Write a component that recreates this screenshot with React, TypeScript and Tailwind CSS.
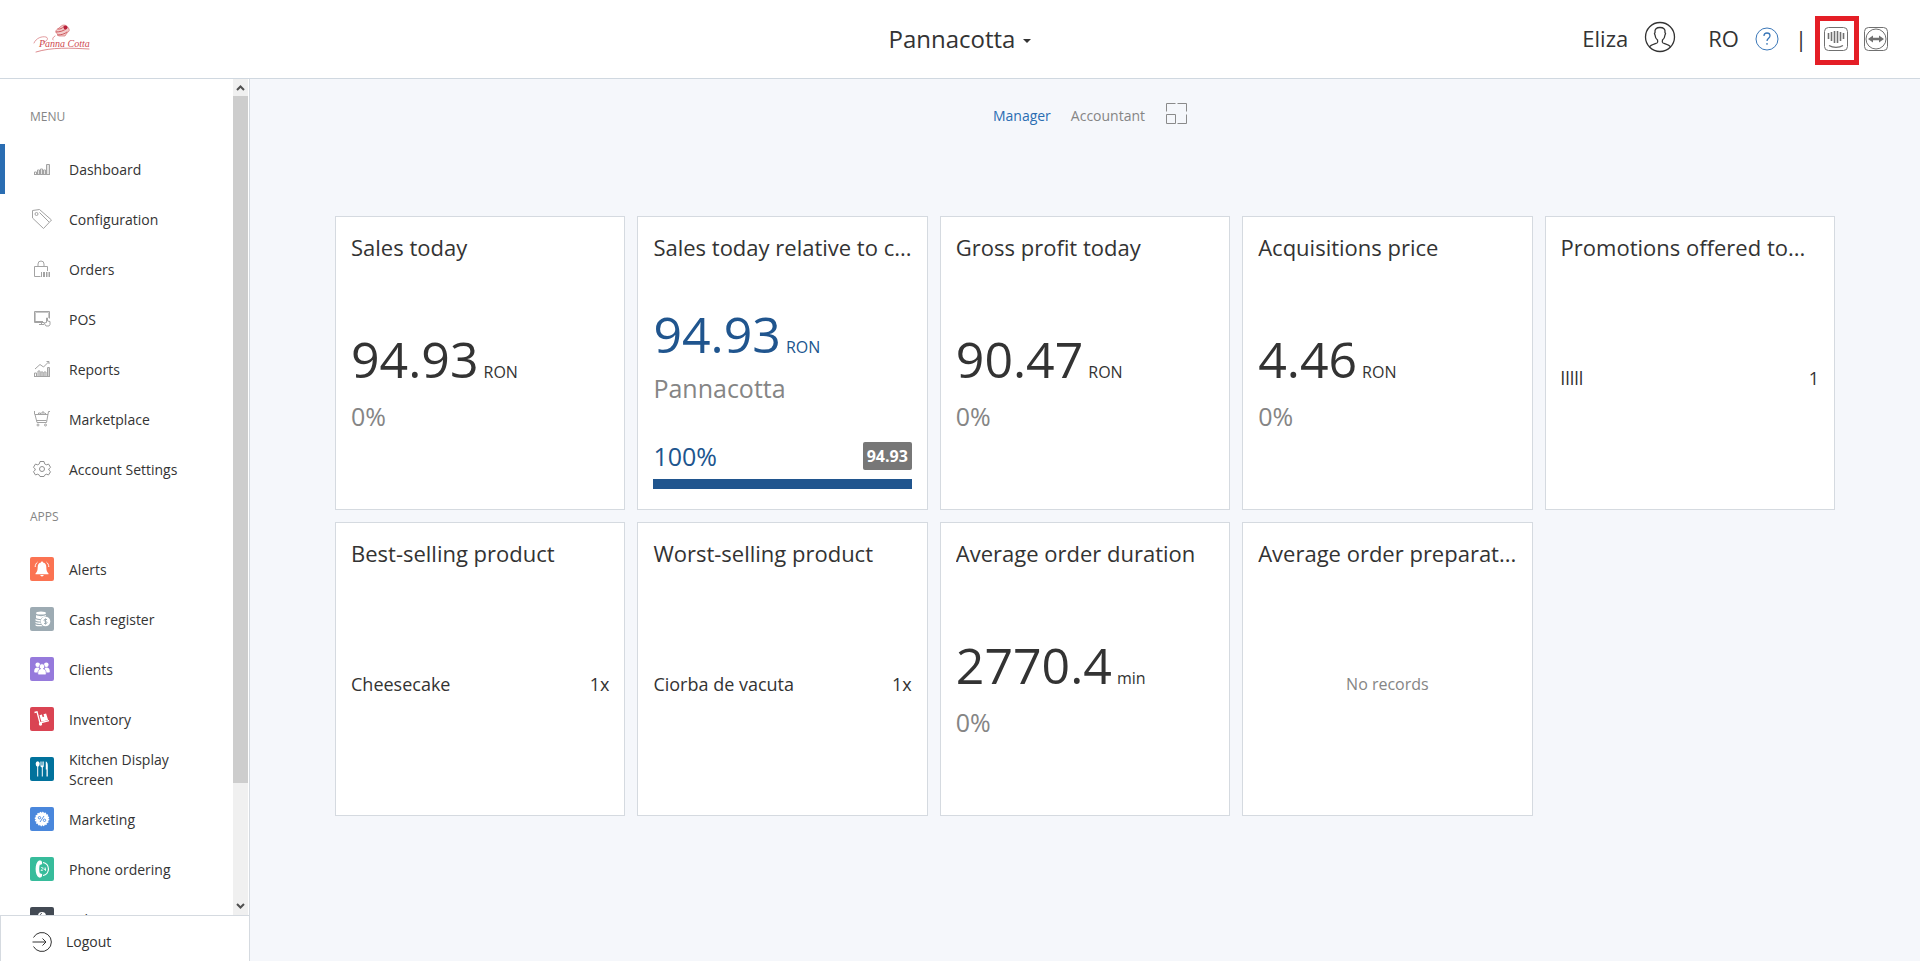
import React from "react";

type IconProps = { className?: string };

const lineIcon = "h-6 w-6 shrink-0 text-[#a3a3a3]";

const BarsIcon = () => (
    <svg viewBox="0 0 24 24" className={lineIcon} fill="none" stroke="currentColor">
        <path d="M4 17.5h16M4.5 17v-2h2v2M7.5 17v-4h2v4M10.5 17v-5h2v5M13.5 17v-4h2v4M16.5 17V7.500h3V17" />
        <path d="M9 14v4M12 13v5M15 14v4M18 8v10" strokeWidth="1.500" opacity=".4" />
    </svg>
);

const TagIcon = () => (
    <svg viewBox="0 0 24 24" className={lineIcon} fill="none" stroke="currentColor">
        <path d="M2.5 3.5l7-1 12 10.500-8 8.500L2.500 11z" />
        <circle cx="6.5" cy="7" r="1.500" />
        <path d="M9.5 5.500l9.500 9.500" />
    </svg>
);

const BagIcon = () => (
    <svg viewBox="0 0 24 24" className={lineIcon} fill="none" stroke="currentColor">
        <path d="M10.5 19.500h-6v-10h13V14M8 9.500V7a3 3 0 0 1 6 0v2.500" />
        <path d="M11.5 15v5M13.5 15v5M14.5 15v5M16.500 15v5M18 15v5M19.500 15v5" />
    </svg>
);

const PosIcon = () => (
    <svg viewBox="0 0 24 24" className={lineIcon} fill="none" stroke="currentColor">
        <path d="M14 15.500H4.500v-11h15v7M5 14.500h8M9 17.500h5M11.500 15.500v2" />
        <path d="M5.5 14V5.500h13V11" opacity=".6" />
        <path d="M16.5 15.500v-4.500h1v3l2.500.5v3l-1 1.500h-3l-2-3z" />
    </svg>
);

const ReportsIcon = () => (
    <svg viewBox="0 0 24 24" className={lineIcon} fill="none" stroke="currentColor">
        <path d="M4 19.500h16M4.500 19v-3h2v3M8 19v-5h2v5M11 19v-4h2v4M14 19v-4h2v4M17.500 19v-8.500h2V19" />
        <path d="M9 15v4M12 16v3M15 16v3M18.500 11v8" opacity=".5" />
        <path d="M5 12l5-4.500 3.500 2.500L18.500 5M16.500 4.500h2.500V7" />
    </svg>
);

const CartIcon = () => (
    <svg viewBox="0 0 24 24" className={lineIcon} fill="none" stroke="currentColor">
        <path d="M20 4.500h-1.500L16.500 15.500H7L5 7.500h13M4.500 4v3.500M6.500 13.500h10" />
        <path d="M8.500 7.500V6h2v1.500M12 7.500V5h2v2.500M15.500 7.500V6" />
        <circle cx="8" cy="18" r="1" />
        <circle cx="15.5" cy="18" r="1" />
    </svg>
);

const GearIcon = () => (
    <svg viewBox="0 0 24 24" className="h-6 w-6 shrink-0 text-[#8f8f8f]" fill="none" stroke="currentColor">
        <path d="M10 4.500h4l.6 2.300 1.700 1 2.300-.7 1.900 3.200-1.700 1.700v1l1.700 1.700-1.900 3.200-2.300-.7-1.700 1-.6 1.300h-4l-.6-1.300-1.700-1-2.300.7-1.900-3.200L5.200 13v-1l-1.700-1.700 1.900-3.200 2.300.7 1.700-1z" />
        <circle cx="12" cy="12" r="2.500" />
    </svg>
);

const AppIcon = ({ className, children }: IconProps & { children: React.ReactNode }) => (
    <svg viewBox="0 0 24 24" className={`h-6 w-6 shrink-0 rounded-xs text-white ${className}`} fill="currentColor">
        {children}
    </svg>
);

const MENU = [
    { name: "Dashboard", icon: <BarsIcon />, active: true },
    { name: "Configuration", icon: <TagIcon /> },
    { name: "Orders", icon: <BagIcon /> },
    { name: "POS", icon: <PosIcon /> },
    { name: "Reports", icon: <ReportsIcon /> },
    { name: "Marketplace", icon: <CartIcon /> },
    { name: "Account Settings", icon: <GearIcon /> },
];

const APPS = [
    {
        name: "Alerts",
        icon: (
            <AppIcon className="bg-[#fb7352]">
                <path d="M12 4.500c.7 0 1 .4 1 1 2.300.5 3.300 2.300 3.300 4.500 0 3.500.7 5 2.200 6.500v.7h-13v-.7C7 15 7.700 13.500 7.700 10c0-2.200 1-4 3.300-4.500 0-.6.300-1 1-1zM10.300 18h3.400a1.700 1.500 0 0 1-3.400 0z" />
                <path d="M7.500 5.200C6 6.300 5.200 8 5.200 10M16.500 5.200C18 6.300 18.800 8 18.800 10" fill="none" stroke="currentColor" />
            </AppIcon>
        ),
    },
    {
        name: "Cash register",
        icon: (
            <AppIcon className="bg-[#9dabb3]">
                <ellipse cx="11" cy="6" rx="5" ry="1.600" />
                <path d="M6 8c2 1.500 8 1.500 10 0v1.200c-3 .3-5 1.800-5.200 3C9 12 7 11.800 6 11zM5.500 12c1.500.9 3 1 5 1v1.500c-2 0-4-.2-5-1zM5.500 14.700c1.500.8 3 .9 5 .9l.4 1.400c-2 0-4-.2-5.400-1zM5.500 17.200c1.500.8 4 1 6 .9l1 1.200c-3 .2-6 0-7-.8z" />
                <circle cx="15.5" cy="14.500" r="4.800" />
                <path d="M17 12.700c-1.500-1-3-.4-3 .6 0 1.500 3 .8 3 2.300 0 1.200-1.800 1.500-3 .6M15.500 11.500v6" fill="none" stroke="#9dabb3" />
            </AppIcon>
        ),
    },
    {
        name: "Clients",
        icon: (
            <AppIcon className="bg-[#967adc]">
                <circle cx="7.7" cy="7.800" r="2.300" />
                <circle cx="16.3" cy="7.800" r="2.300" />
                <path d="M4.200 14.500c0-2.700 1-4 3.500-4 .8 0 1.300.2 1.700.5L8 15.500H5.500c-1 0-1.300-.4-1.300-1zM19.800 14.500c0-2.700-1-4-3.500-4-.8 0-1.300.2-1.700.5l1.400 4.500h2.500c1 0 1.300-.4 1.300-1z" />
                <path d="M12 6.800a2.700 2.700 0 0 1 1.300 5c2 .5 2.900 2 2.900 4.500 0 1-.5 1.500-1.500 1.500H9.300c-1 0-1.500-.5-1.500-1.500 0-2.500.9-4 2.900-4.500a2.700 2.700 0 0 1 1.300-5z" stroke="#967adc" strokeWidth=".6" />
            </AppIcon>
        ),
    },
    {
        name: "Inventory",
        icon: (
            <AppIcon className="bg-[#da4453]">
                <path d="M4.500 5.500l2.500-.6 3 11 9-2.300" fill="none" stroke="currentColor" strokeWidth="1.300" />
                <path d="M9.500 8.300l2.400-.7.7 2.500 1.600-.4-.7-2.500 2.600-.7 2 6.500-6.700 1.800z" />
                <circle cx="10.5" cy="17" r="1.700" />
            </AppIcon>
        ),
    },
    {
        name: "Kitchen Display Screen",
        icon: (
            <AppIcon className="bg-[#01729c]">
                <ellipse cx="7.7" cy="7" rx="2" ry="2.700" />
                <path d="M7.200 9h1v10.500h-1zM10.500 4.500h.7v4h.5v-4h.8v4h.5v-4h.7v5l-.9 1V19.500h-1v-9l-1.300-1zM15.800 4.500c1.500.5 2 2 2 4v11h-1.300v-7h-.7z" />
            </AppIcon>
        ),
    },
    {
        name: "Marketing",
        icon: (
            <AppIcon className="bg-[#4a87dc]">
                <circle cx="12" cy="12" r="6.500" stroke="currentColor" strokeDasharray="1.500 1" strokeWidth="1.500" />
                <g fill="none" stroke="#4a87dc" strokeWidth=".9">
                    <path d="M14 9l-4 6" />
                    <circle cx="9.5" cy="10.700" r="1.200" />
                    <circle cx="14.5" cy="13.300" r="1.200" />
                </g>
            </AppIcon>
        ),
    },
    {
        name: "Phone ordering",
        icon: (
            <AppIcon className="bg-[#37bc9b]">
                <path d="M9 3.500c1-.3 2.500 0 2.800 1l.4 2c0 .8-1.500 1.200-2.400 1.300-.8 2.500-.8 6 0 8.500.9.100 2.400.5 2.400 1.300l-.4 2c-.3 1-1.800 1.300-2.800 1C4.500 18 4.500 6 9 3.500z" />
                <path d="M13 5.500a6.600 6.600 0 0 1 0 13" fill="none" stroke="currentColor" strokeWidth="1.200" />
                <path d="M11 10.500h1.500v1.300L11 13.500h1.800M14 10.500v2h2M15.500 10.500v3.500" fill="none" stroke="currentColor" strokeWidth=".7" />
            </AppIcon>
        ),
    },
    {
        name: "Sales statistics",
        icon: (
            <AppIcon className="bg-[#434a54]">
                <circle cx="12" cy="9" r="4" />
                <path d="M12 6.500c-2 0-2 2 0 2.500s2 2.500 0 2.500" fill="none" stroke="#434a54" />
            </AppIcon>
        ),
    },
];

const Logo = () => (
    <svg viewBox="0 0 60 32" className="h-8 w-15" fill="none" stroke="#cf5a5f" strokeLinecap="round">
        <path d="M24 9c-1-2 2-3 3-4s3-3 5-3 4 2 5 4-1 3-2 4l-2 3h-6z" fill="#f3cccc" strokeWidth=".6" />
        <path d="M24 9c4 0 8-1 11-4M25.5 12c4 0 7-1 9.500-3M26 6c2 .5 4-.5 6-2.500" />
        <circle cx="33.5" cy="4.500" r="2" fill="#b8203a" stroke="none" />
        <path d="M2 20c2-5 8-7 12-6 3 1 1 5-3 5M23 13c-2 1-3 3-2 4" strokeWidth=".6" />
        <path d="M4 29c16-5 34-4 53-3" strokeWidth=".7" />
        <text x="7" y="24" fontSize="10" fontStyle="italic" fontFamily="Liberation Serif, serif" fill="#cf4a50" stroke="none">Panna Cotta</text>
    </svg>
);

const UserIcon = ({ className }: IconProps) => (
    <svg viewBox="0 0 32 32" className={`h-8 w-8 ${className}`} fill="none" stroke="#333" strokeWidth="1.300">
        <circle cx="16" cy="16" r="14.500" />
        <path d="M5.500 26c1-2 5-3 7.500-4 .8-.4.800-2 .5-3-1.500-1-2.300-3-2.500-5-.8-1-.5-2 0-2.500C10.500 8 12.500 6.500 16 6.500s5.500 1.500 5 5c.5.500.8 1.500 0 2.500-.2 2-1 4-2.500 5-.3 1-.3 2.600.5 3 2.500 1 6.500 2 7.500 4" />
    </svg>
);

const HelpIcon = () => (
    <svg viewBox="0 0 24 24" className="h-6 w-6" fill="none" stroke="#3a77b8">
        <circle cx="12" cy="12" r="11" />
        <path d="M9 9c0-2 1.200-3 3-3s3 1 3 2.800c0 2.400-3 2.400-3 5.200M12 16v1.700" strokeWidth="1.300" />
    </svg>
);

const IntercomIcon = () => (
    <svg viewBox="0 0 24 24" className="h-6 w-6" fill="none" stroke="#707070">
        <rect x=".5" y=".5" width="23" height="23" rx="4" />
        <path d="M4.500 6v6M7.500 5v9M10.500 4v12M13.500 4v12M16.500 5v9M19.500 6v6" strokeWidth="1.600" />
        <path d="M5 18.500c4 2.500 10 2.500 14 0" strokeWidth="1.400" />
    </svg>
);

const TeamViewerIcon = () => (
    <svg viewBox="0 0 24 24" className="h-6 w-6" fill="none" stroke="#707070">
        <rect x=".5" y=".5" width="23" height="23" rx="4" />
        <circle cx="12" cy="12" r="10" />
        <path d="M4 12l5-3.500v2.300h6V8.500l5 3.500-5 3.500v-2.300H9v2.300z" fill="#707070" stroke="none" />
    </svg>
);

const LayoutIcon = () => (
    <svg viewBox="0 0 22 22" className="h-[22px] w-[22px]" fill="none" stroke="#8a8a8a">
        <path d="M1.500 9.500v-8h9M12.500 1.500h9v8M21.500 12.500v9h-9M1.500 12.500h9v9h-9z" />
    </svg>
);

const LogoutIcon = () => (
    <svg viewBox="0 0 22 22" className="h-[22px] w-[22px]" fill="none" stroke="#333">
        <path d="M2.500 6.500a9.500 9.500 0 1 1 0 9M1.500 11H15M11.500 7.500L15 11l-3.500 3.500" />
    </svg>
);

const Chevron = ({ className }: IconProps) => (
    <svg viewBox="0 0 15 17" className={`h-[17px] w-[15px] ${className}`} fill="none" stroke="#505050" strokeWidth="2">
        <path d="M4 11l3.500-3.500L11 11" />
    </svg>
);

const SideLabel = ({ children }: { children: React.ReactNode }) => (
    <h3 className="flex h-[50px] items-center pb-1 pl-[30px] text-xs text-[#858585]">{children}</h3>
);

const SideLink = ({ name, icon, active }: { name: string; icon: React.ReactNode; active?: boolean }) => (
    <a href="#" className={`flex h-[50px] items-center gap-[15px] border-l-5 pr-8 pl-[25px] ${active ? "border-[#2a6db2]" : "border-transparent"}`}>
        {icon}
        <span className="pt-0.5">{name}</span>
    </a>
);

const Card = ({ title, children }: { title: string; children: React.ReactNode }) => (
    <section className="flex h-[294px] min-w-0 flex-col border border-[#d5dae0] bg-white p-[15px]">
        <h2 className="truncate text-[22px] leading-[30px]">{title}</h2>
        {children}
    </section>
);

const Amount = ({ value, unit }: { value: string; unit: string }) => (
    <p className="text-[50px] leading-[60px]">
        {value}
        <span className="ml-[5px] text-base">{unit}</span>
    </p>
);

const Stat = ({ value, unit }: { value: string; unit: string }) => (
    <div className="flex flex-1 flex-col justify-center pt-1">
        <Amount value={value} unit={unit} />
        <p className="mt-[11px] text-[25px] leading-8 text-[#858585]">0%</p>
    </div>
);

const Row = ({ name, value }: { name: string; value: string }) => (
    <div className="flex flex-1 items-center justify-between text-lg">
        <span>{name}</span>
        <span>{value}</span>
    </div>
);

export default function App() {
    return (
        <div className="flex h-screen flex-col bg-[#f5f7fb] font-['Open_Sans',sans-serif] text-sm text-[#333]">
            {/* HEADER */}
            <header className="grid h-[79px] shrink-0 grid-cols-3 items-center border-b border-[#d0d8e0] bg-white px-8">
                <a href="#" aria-label="Home">
                    <Logo />
                </a>
                <button className="flex items-center gap-2 justify-self-center text-2xl">
                    Pannacotta
                    <span className="mt-1 border-x-4 border-t-4 border-x-transparent border-t-[#333]" />
                </button>
                <div className="flex items-center justify-end text-[22px]">
                    <a href="#" className="flex items-center gap-4">
                        Eliza <UserIcon className="mb-1" />
                    </a>
                    <button className="ml-8">RO</button>
                    <button aria-label="Help" className="ml-4"><HelpIcon /></button>
                    <span className="ml-4">|</span>
                    <button aria-label="Chat" className="mt-[3px] ml-2 flex h-[49px] w-11 items-center justify-center border-5 border-[#e41e26] pr-0.5 pb-1">
                        <IntercomIcon />
                    </button>
                    <button aria-label="Remote support" className="ml-[5px]"><TeamViewerIcon /></button>
                </div>
            </header>

            <div className="flex min-h-0 flex-1">
                {/* SIDEBAR */}
                <aside className="flex w-[250px] shrink-0 flex-col border-r border-[#d5dae0] bg-white">
                    <div className="flex min-h-0 flex-1">
                        <nav className="flex-1 overflow-hidden pt-[15px] leading-5">
                            <SideLabel>MENU</SideLabel>
                            {MENU.map((m) => <SideLink key={m.name} {...m} />)}
                            <SideLabel>APPS</SideLabel>
                            {APPS.map((a) => <SideLink key={a.name} {...a} />)}
                        </nav>
                        <div className="mr-px flex w-[15px] flex-col bg-[#f0f0f0]">
                            <Chevron />
                            <div className="min-h-0 flex-1">
                                <div className="h-6/7 bg-[#cdcdcd]" />
                            </div>
                            <Chevron className="rotate-180" />
                        </div>
                    </div>
                    <a href="#" className="flex h-[46px] shrink-0 items-center gap-[13px] border-t border-l border-[#d5dae0] pt-1.5 pl-[30px]">
                        <LogoutIcon /> Logout
                    </a>
                </aside>

                {/* DASHBOARD */}
                <main className="min-w-0 flex-1 px-5">
                    <div className="flex h-[137px] items-start justify-center gap-5 pt-[23px] pl-2.5">
                        <a href="#" className="pt-1 text-[#2a6db2]">Manager</a>
                        <a href="#" className="pt-1 text-[#858585]">Accountant</a>
                        <button aria-label="Edit layout"><LayoutIcon /></button>
                    </div>
                    <div className="mx-auto grid max-w-[1500px] grid-cols-5 gap-3">
                        <Card title="Sales today"><Stat value="94.93" unit="RON" /></Card>
                        <Card title="Sales today relative to c...">
                            <div className="flex flex-1 flex-col justify-end pb-[5px] text-[25px] leading-8">
                                <div className="text-[#20558e]"><Amount value="94.93" unit="RON" /></div>
                                <p className="mt-2 text-[#858585]">Pannacotta</p>
                                <div className="mt-9 mb-[7px] flex items-center justify-between text-[#20558e]">
                                    100%
                                    <span className="rounded-xs bg-[#777] px-1 text-base leading-7 font-bold text-white">94.93</span>
                                </div>
                                <div className="h-2.5 bg-[#20558e]" />
                            </div>
                        </Card>
                        <Card title="Gross profit today"><Stat value="90.47" unit="RON" /></Card>
                        <Card title="Acquisitions price"><Stat value="4.46" unit="RON" /></Card>
                        <Card title="Promotions offered to..."><Row name="lllll" value="1" /></Card>
                        <Card title="Best-selling product"><Row name="Cheesecake" value="1x" /></Card>
                        <Card title="Worst-selling product"><Row name="Ciorba de vacuta" value="1x" /></Card>
                        <Card title="Average order duration"><Stat value="2770.4" unit="min" /></Card>
                        <Card title="Average order preparat...">
                            <p className="flex flex-1 items-center justify-center text-base text-[#858585]">No records</p>
                        </Card>
                    </div>
                </main>
            </div>
        </div>
    );
}
